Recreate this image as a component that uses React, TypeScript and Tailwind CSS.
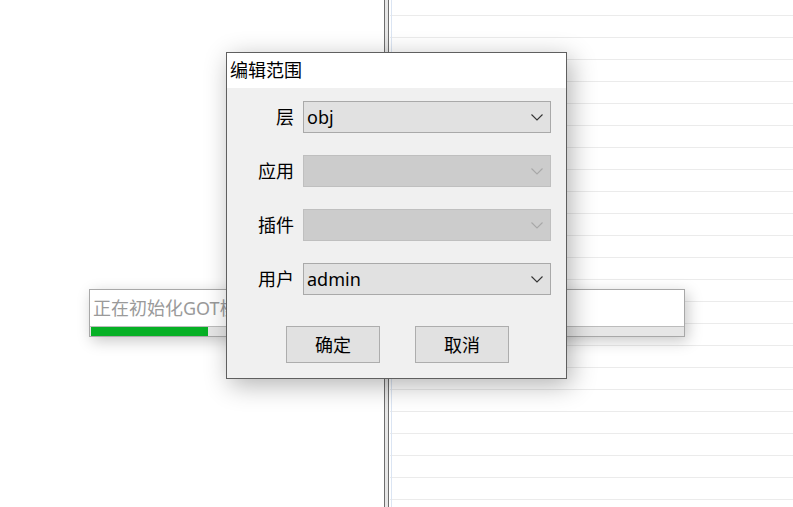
import React from "react";

const font = "font-['Noto_Sans','Noto_Sans_CJK_SC',sans-serif]";

function Chevron({ disabled }: { disabled?: boolean }) {
  return (
    <svg width="12" height="7" viewBox="0 0 12 7" className="shrink-0">
      <path
        d="M0.5 0.5 L6 6 L11.5 0.5"
        fill="none"
        stroke={disabled ? "#a8a8a8" : "#333333"}
        strokeWidth="1.1"
      />
    </svg>
  );
}

function Row({ label, value, disabled }: { label: string; value?: string; disabled?: boolean }) {
  return (
    <div className="flex items-center h-[32px]">
      <div className="w-[67px] text-right text-[18px] leading-none text-black">{label}</div>
      <div
        className={
          "ml-[9px] w-[248px] h-[32px] border flex items-center justify-between pl-[3px] pr-[7px] " +
          (disabled ? "bg-[#cccccc] border-[#bfbfbf]" : "bg-[#e1e1e1] border-[#a9a9a9]")
        }
      >
        <span className="text-[18px] leading-none text-black">{value ?? ""}</span>
        <Chevron disabled={disabled} />
      </div>
    </div>
  );
}

export default function App() {
  const lines = Array.from({ length: 22 });
  return (
    <div className={"relative w-[793px] h-[507px] overflow-hidden bg-white flex " + font}>
      <div className="w-[384px] h-full bg-white" />
      <div className="w-[5px] h-full border-x border-[#6e6e6e] bg-[#e6e6e6]" />
      <div className="relative flex-1 h-full pl-[1px]">
        <div className="absolute left-[2px] top-0 h-full w-px bg-[#dbe5f3]" />
        <div className="flex flex-col">
          <div className="h-[16px] border-b border-[#ebebeb]" />
          {lines.map((_, i) => (
            <div key={i} className="h-[22px] border-b border-[#ebebeb]" />
          ))}
        </div>
      </div>

      {/* progress window */}
      <div className="absolute left-[89px] top-[289px] w-[596px] h-[48px] border border-[#a8a8a8] bg-white flex flex-col shadow-[3px_4px_14px_rgba(0,0,0,0.22)]">
        <div className="h-[36px] pl-[3px] flex items-center text-[18px] leading-none text-[#9a9a9a]">
          正在初始化GOT模块...
        </div>
        <div className="h-[10px] border-t border-[#bcbcbc] bg-[#e6e6e6] pl-[1px]">
          <div className="w-[117px] h-full bg-[#06b025]" />
        </div>
      </div>

      {/* dialog */}
      <div className="absolute left-[226px] top-[52px] w-[341px] h-[327px] border border-[#5f5f5f] bg-[#f0f0f0] flex flex-col shadow-[4px_6px_24px_rgba(0,0,0,0.3)]">
        <div className="h-[35px] bg-white pl-[3px] pb-[2px] flex items-center text-[18px] leading-none text-black">
          编辑范围
        </div>
        <div className="flex flex-col pt-[13px] gap-[22px]">
          <Row label="层" value="obj" />
          <Row label="应用" disabled />
          <Row label="插件" disabled />
          <Row label="用户" value="admin" />
        </div>
        <div className="mt-[31px] flex justify-center gap-[35px] pl-[2px]">
          <div className="w-[94px] h-[37px] border border-[#adadad] bg-[#e1e1e1] flex items-center justify-center text-[18px] leading-none text-black">
            确定
          </div>
          <div className="w-[94px] h-[37px] border border-[#adadad] bg-[#e1e1e1] flex items-center justify-center text-[18px] leading-none text-black">
            取消
          </div>
        </div>
      </div>
    </div>
  );
}
